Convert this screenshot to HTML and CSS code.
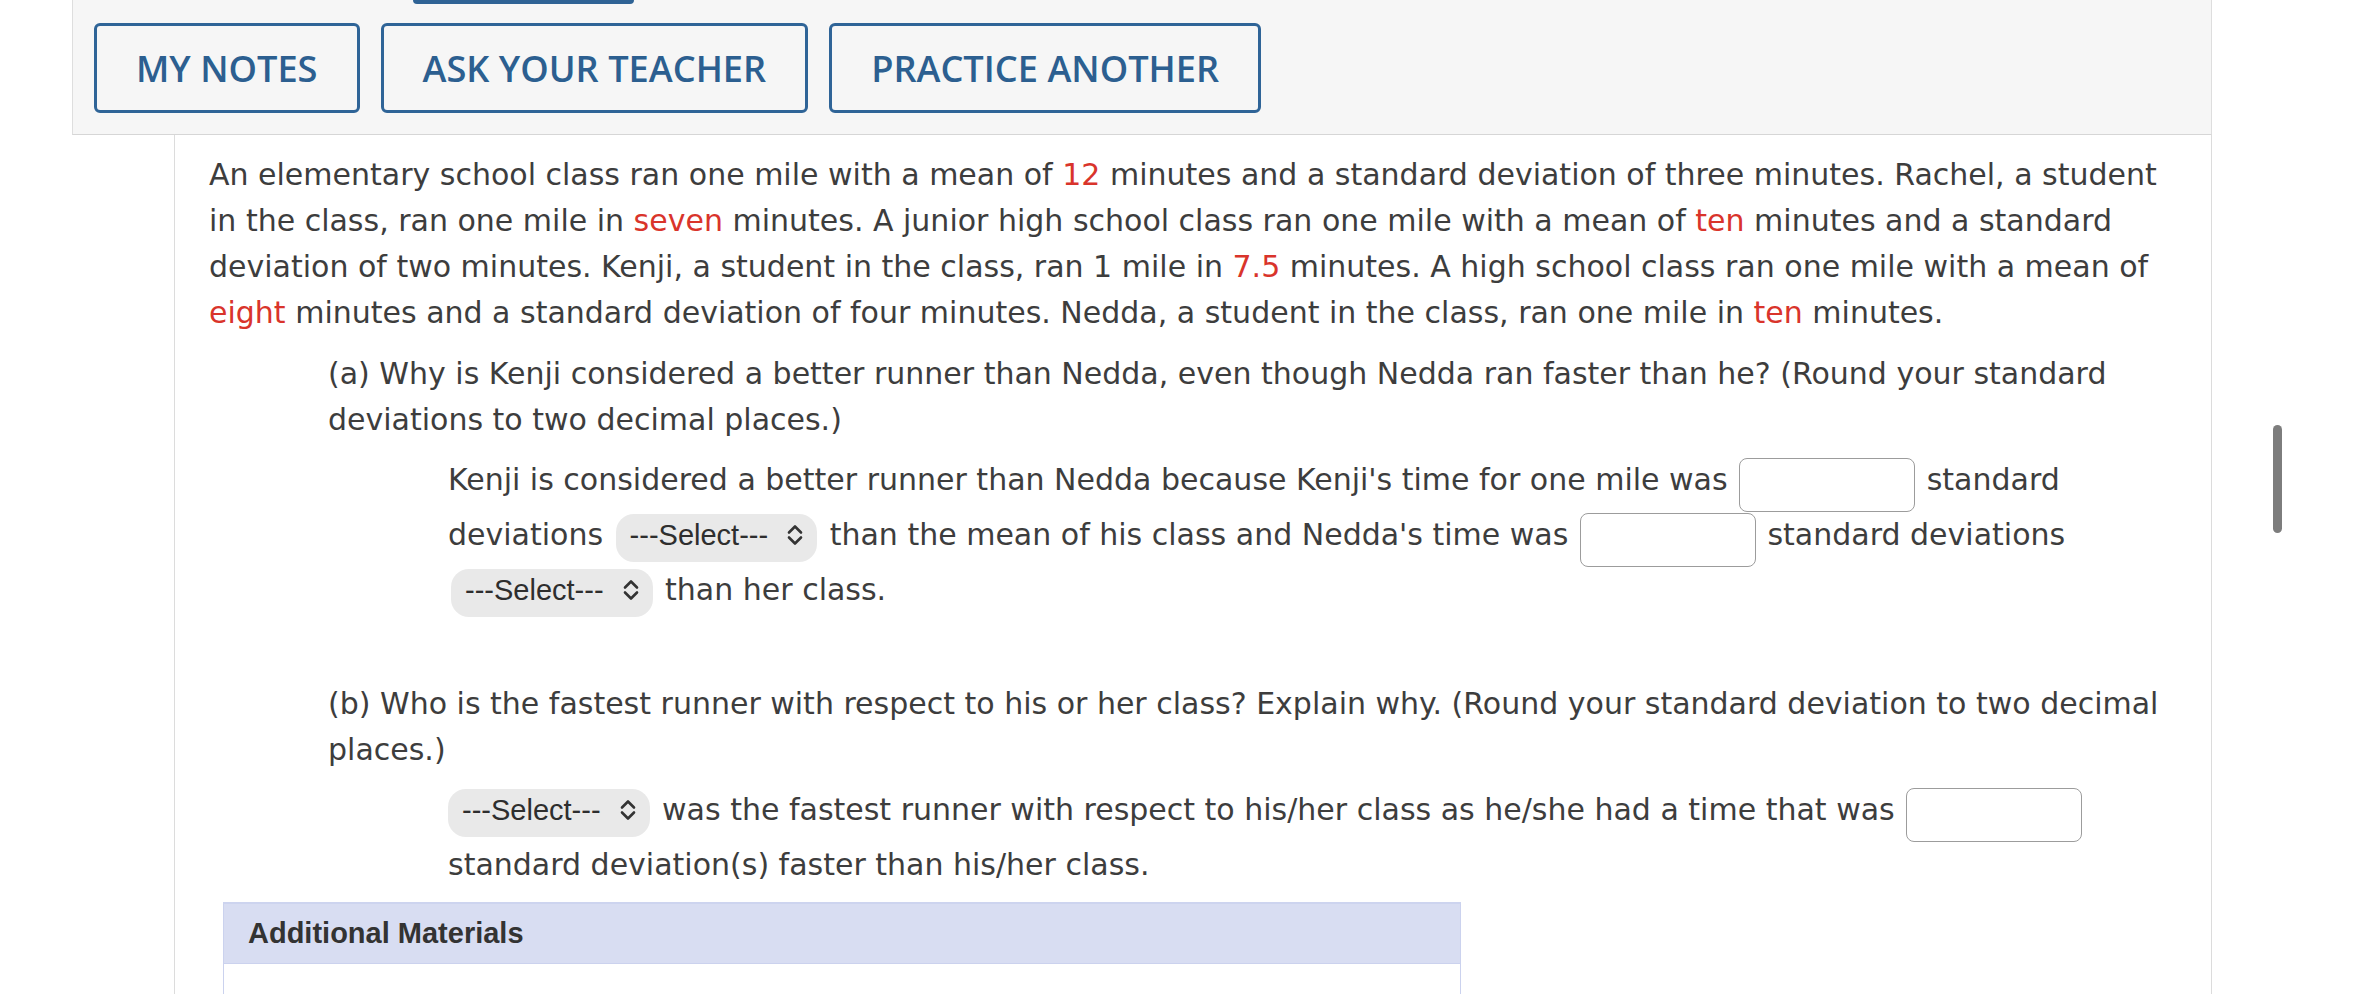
FILE: index.html
```html
<!DOCTYPE html>
<html lang="en">
<head>
<meta charset="utf-8">
<title>Question</title>
<link rel="stylesheet" href="styles.css">
</head>
<body>
<div class="page">
  <div class="toolbar">
    <div class="tab"></div>
    <div class="btn-row">
      <button class="btn" type="button">MY NOTES</button>
      <button class="btn" type="button">ASK YOUR TEACHER</button>
      <button class="btn" type="button">PRACTICE ANOTHER</button>
    </div>
  </div>
  <div class="question">
    <p class="stem">An elementary school class ran one mile with a mean of <span class="red">12</span> minutes and a standard deviation of three minutes. Rachel, a student in the class, ran one mile in <span class="red">seven</span> minutes. A junior high school class ran one mile with a mean of <span class="red">ten</span> minutes and a standard deviation of two minutes. Kenji, a student in the class, ran 1 mile in <span class="red">7.5</span> minutes. A high school class ran one mile with a mean of <span class="red">eight</span> minutes and a standard deviation of four minutes. Nedda, a student in the class, ran one mile in <span class="red">ten</span> minutes.</p>
    <div class="part">
      <p class="prompt">(a) Why is Kenji considered a better runner than Nedda, even though Nedda ran faster than he? (Round your standard deviations to two decimal places.)</p>
      <p class="answer">Kenji is considered a better runner than Nedda because Kenji's time for one mile was <span class="blank"></span> standard deviations <span class="select">---Select---<svg class="chev" viewBox="0 0 18 22" width="18" height="22"><path d="M3 8.5 L9 2.5 L15 8.5 M3 13.5 L9 19.5 L15 13.5" fill="none" stroke="#333" stroke-width="2.6" stroke-linecap="round" stroke-linejoin="round"/></svg></span> than the mean of his class and Nedda's time was <span class="blank"></span> standard deviations <span class="select">---Select---<svg class="chev" viewBox="0 0 18 22" width="18" height="22"><path d="M3 8.5 L9 2.5 L15 8.5 M3 13.5 L9 19.5 L15 13.5" fill="none" stroke="#333" stroke-width="2.6" stroke-linecap="round" stroke-linejoin="round"/></svg></span> than her class.</p>
    </div>
    <div class="part part-b">
      <p class="prompt">(b) Who is the fastest runner with respect to his or her class? Explain why. (Round your standard deviation to two decimal places.)</p>
      <p class="answer"><span class="select">---Select---<svg class="chev" viewBox="0 0 18 22" width="18" height="22"><path d="M3 8.5 L9 2.5 L15 8.5 M3 13.5 L9 19.5 L15 13.5" fill="none" stroke="#333" stroke-width="2.6" stroke-linecap="round" stroke-linejoin="round"/></svg></span> was the fastest runner with respect to his/her class as he/she had a time that was <span class="blank"></span> standard deviation(s) faster than his/her class.</p>
    </div>
    <div class="materials">
      <div class="materials-head">Additional Materials</div>
      <div class="materials-body"></div>
    </div>
  </div>
</div>
<div class="scrollbar"></div>
</body>
</html>
```

FILE: styles.css
```css
html, body {
  margin: 0;
  padding: 0;
  background: #ffffff;
}

body {
  font-family: "DejaVu Sans", Verdana, sans-serif;
  color: #3d3d3d;
  overflow: hidden;
}

.page {
  margin-left: 72px;
  width: 2140px;
}

.toolbar {
  box-sizing: border-box;
  height: 135px;
  background: #f6f6f6;
  border-left: 1px solid #dedede;
  border-right: 1px solid #dedede;
  border-bottom: 1px solid #d6d6d6;
  padding: 0 21px 21px;
}

.tab {
  width: 221px;
  height: 4px;
  margin-left: 319px;
  background: #2f6395;
  border-radius: 0 0 6px 6px;
}

.btn-row {
  display: flex;
  gap: 21px;
  margin-top: 19px;
}

.btn {
  box-sizing: border-box;
  height: 90px;
  padding: 0 39px;
  background: transparent;
  border: 3px solid #2f6497;
  border-radius: 6px;
  color: #2c5f90;
  font-family: "Open Sans", "Liberation Sans", sans-serif;
  font-weight: 600;
  font-size: 36.2px;
  line-height: 1;
}

.question {
  margin-left: 102px;
  border-left: 1px solid #dcdcdc;
  border-right: 1px solid #dcdcdc;
  padding: 17px 37px 0 34px;
  font-size: 30px;
  line-height: 46px;
}

.stem,
.prompt {
  margin: 0;
}

.red {
  color: #d9342b;
}

.part {
  margin-left: 119px;
  margin-top: 15px;
}

.part-b {
  margin-top: 64px;
}

.answer {
  margin: 0 0 0 120px;
  padding-top: 14px;
}

.blank {
  display: inline-block;
  box-sizing: border-box;
  width: 176px;
  height: 54px;
  border: 1.5px solid #9c9c9c;
  border-radius: 8px;
  background: #fff;
  vertical-align: -22px;
  margin: 0 2px;
}

.select {
  display: inline-block;
  box-sizing: border-box;
  height: 48px;
  padding: 1px 13px 7px 14px;
  margin: 0 3px;
  border-radius: 18px;
  background: #e9e9e9;
  color: #2e2e2e;
  font-family: "Liberation Sans", Arial, sans-serif;
  font-size: 29px;
  line-height: 40px;
}

.answer > .select:first-child {
  margin-left: 0;
}

.chev {
  vertical-align: middle;
  margin-left: 18px;
  position: relative;
  top: -2px;
}

.materials {
  margin-left: 14px;
  margin-top: 14px;
  width: 1238px;
}

.materials-head {
  box-sizing: border-box;
  height: 62px;
  padding-left: 24px;
  background: #d8ddf2;
  border: 1px solid #cbd2ee;
  border-top: 2px solid #cdd4ef;
  font-family: "Liberation Sans", Arial, sans-serif;
  font-weight: 700;
  font-size: 29px;
  line-height: 58px;
  color: #333;
}

.materials-body {
  height: 120px;
  border-left: 1px solid #cbd2ee;
  border-right: 1px solid #cbd2ee;
}

.scrollbar {
  position: fixed;
  left: 2273px;
  top: 425px;
  width: 9px;
  height: 108px;
  border-radius: 5px;
  background: #7d7d7d;
}
```
